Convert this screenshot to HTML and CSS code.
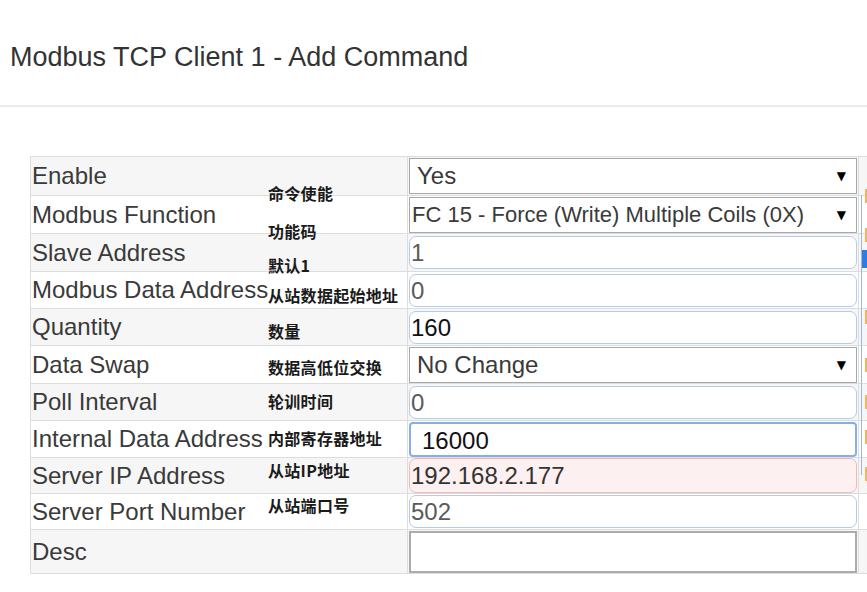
FILE: index.html
```html
<!DOCTYPE html>
<html lang="en">
<head>
<meta charset="utf-8">
<title>Modbus TCP Client 1 - Add Command</title>
<link rel="stylesheet" href="styles.css">
</head>
<body>
<div class="page">
  <header class="page-head">
    <h1 class="title">Modbus TCP Client 1 - Add Command</h1>
  </header>
  <main class="content">
    <table class="cmd">
      <colgroup>
        <col class="c-label">
        <col class="c-val">
        <col class="c-edge">
      </colgroup>
      <tr class="row shade first">
        <td class="label"><span class="en">Enable</span><span class="cn o28">命令使能</span></td>
        <td class="val"><div class="sel sel-yes"><span>Yes</span><span class="arrow">▼</span></div></td>
        <td class="edge"></td>
      </tr>
      <tr class="row h37">
        <td class="label"><span class="en">Modbus Function</span><span class="cn o27">功能码</span></td>
        <td class="val"><div class="sel sel-fc"><span>FC 15 - Force (Write) Multiple Coils (0X)</span><span class="arrow">▼</span></div></td>
        <td class="edge"></td>
      </tr>
      <tr class="row shade h37">
        <td class="label"><span class="en">Slave Address</span><span class="cn o23">默认1</span></td>
        <td class="val"><div class="inp">1</div></td>
        <td class="edge"></td>
      </tr>
      <tr class="row">
        <td class="label"><span class="en">Modbus Data Address</span><span class="cn o15">从站数据起始地址</span></td>
        <td class="val"><div class="inp">0</div></td>
        <td class="edge"></td>
      </tr>
      <tr class="row shade">
        <td class="label"><span class="en">Quantity</span><span class="cn o14">数量</span></td>
        <td class="val"><div class="inp inp-dark">160</div></td>
        <td class="edge"></td>
      </tr>
      <tr class="row h37">
        <td class="label"><span class="en">Data Swap</span><span class="cn o13">数据高低位交换</span></td>
        <td class="val"><div class="sel sel-yes"><span>No Change</span><span class="arrow">▼</span></div></td>
        <td class="edge"></td>
      </tr>
      <tr class="row shade">
        <td class="label"><span class="en">Poll Interval</span><span class="cn o9">轮训时间</span></td>
        <td class="val"><div class="inp">0</div></td>
        <td class="edge"></td>
      </tr>
      <tr class="row">
        <td class="label"><span class="en">Internal Data Address</span><span class="cn o9">内部寄存器地址</span></td>
        <td class="val"><div class="inp inp-focus">16000</div></td>
        <td class="edge"></td>
      </tr>
      <tr class="row shade short">
        <td class="label"><span class="en">Server IP Address</span><span class="cn o4">从站IP地址</span></td>
        <td class="val"><div class="inp inp-error">192.168.2.177</div></td>
        <td class="edge"></td>
      </tr>
      <tr class="row short">
        <td class="label"><span class="en">Server Port Number</span><span class="cn o3">从站端口号</span></td>
        <td class="val"><div class="inp">502</div></td>
        <td class="edge"></td>
      </tr>
      <tr class="row shade tall">
        <td class="label"><span class="en">Desc</span></td>
        <td class="val"><div class="area"></div></td>
        <td class="edge"></td>
      </tr>
    </table>
    <div class="scroll-hint" aria-hidden="true">
      <span class="mark m1"></span>
      <span class="mark m2"></span>
      <span class="thumb"></span>
      <span class="mark m3"></span>
      <span class="mark m4"></span>
      <span class="mark m5"></span>
      <span class="mark m6"></span>
      <span class="mark m7"></span>
    </div>
  </main>
</div>
</body>
</html>
```

FILE: styles.css
```css
html, body {
  margin: 0;
  padding: 0;
  background: #ffffff;
}

.page {
  width: 867px;
  height: 592px;
  overflow: hidden;
  font-family: "Liberation Sans", Arial, "Noto Sans CJK SC", sans-serif;
  color: #333333;
}

.page-head {
  padding: 41px 0 32px 10px;
  border-bottom: 2px solid #ebebeb;
}

.title {
  margin: 0;
  font-size: 27px;
  line-height: 32px;
  font-weight: normal;
  color: #333333;
}

.content {
  position: relative;
  padding: 49px 0 0 30px;
}

.cmd {
  border-collapse: collapse;
  table-layout: fixed;
  width: 888px;
}

.c-label { width: 377px; }
.c-val { width: 451px; }
.c-edge { width: 60px; }

.cmd td {
  border: 1px solid #dddddd;
  padding: 0;
  height: 36px;
  vertical-align: middle;
}

.row.first td { height: 38px; }
.row.h37 td { height: 37px; }
.row.short td { height: 35px; }
.row.tall td { height: 43px; }

.row td { background: #ffffff; }
.row.shade td { background: #f6f6f6; }

.cmd td.label {
  position: relative;
  padding-left: 1px;
  font-size: 24px;
  line-height: 28px;
  color: #3a3a3a;
  white-space: nowrap;
}

.cn {
  position: absolute;
  z-index: 5;
  left: 237px;
  font-family: "Noto Sans CJK SC", "Liberation Sans", sans-serif;
  font-size: 16px;
  line-height: 16px;
  font-weight: bold;
  letter-spacing: 0.3px;
  color: #1a1a1a;
}

.o28 { top: 28px; }
.o27 { top: 27px; }
.o23 { top: 23px; }
.o15 { top: 15px; }
.o14 { top: 14px; }
.o13 { top: 13px; }
.o9 { top: 9px; }
.o4 { top: 4px; }
.o3 { top: 3px; }

.cmd td.val {
  padding: 0 1px;
}

.sel {
  box-sizing: border-box;
  height: 36px;
  border: 1px solid #a8a8a8;
  background: #ffffff;
  display: flex;
  align-items: center;
  justify-content: space-between;
  padding: 0 10px 0 7px;
  font-size: 24px;
  color: #3a3a3a;
}

.sel-fc {
  padding-left: 2px;
  font-size: 22px;
}

.arrow {
  font-size: 12px;
  color: #000000;
  font-family: "DejaVu Sans", sans-serif;
}

.inp {
  box-sizing: border-box;
  height: 33px;
  border: 1px solid #b4cbea;
  border-radius: 7px;
  background: #ffffff;
  padding-left: 1px;
  font-size: 24px;
  line-height: 31px;
  color: #5a5a5a;
}

.inp-dark {
  color: #111111;
}

.inp-focus {
  height: 35px;
  border: 2px solid #86aee8;
  border-radius: 4px;
  padding-left: 11px;
  line-height: 33px;
  color: #111111;
}

.inp-error {
  height: 35px;
  background: #fdf0f0;
  border-color: #f0b8b8;
  line-height: 33px;
  color: #333333;
}

.area {
  box-sizing: border-box;
  height: 42px;
  border: 2px solid #ababab;
  background: #ffffff;
}

.scroll-hint {
  position: absolute;
  left: 861px;
  top: 88px;
  width: 7px;
  height: 280px;
  border-left: 1px solid #9db7df;
}

.mark {
  position: absolute;
  left: 3px;
  width: 3px;
  height: 14px;
  background: #efb466;
}

.m1 { top: -6px; }
.m2 { top: 33px; }
.m3 { top: 115px; }
.m4 { top: 163px; }
.m5 { top: 200px; }
.m6 { top: 235px; }
.m7 { top: 272px; }

.thumb {
  position: absolute;
  left: 0;
  top: 55px;
  width: 6px;
  height: 18px;
  background: #2f7be0;
}
```
